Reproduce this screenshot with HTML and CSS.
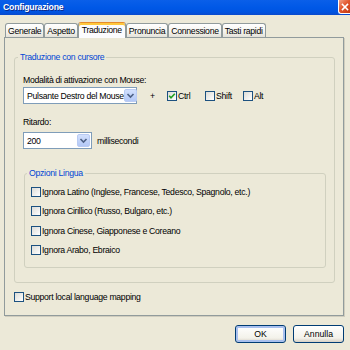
FILE: index.html
```html
<!DOCTYPE html>
<html lang="it">
<head>
  <meta charset="UTF-8">
  <title>Configurazione</title>
  <link rel="stylesheet" href="styles.css">
</head>
<body>
  <div class="window">
    <div class="titlebar">
      <span class="title">Configurazione</span>
      <span class="close">
        <svg width="10" height="10" viewBox="0 0 10 10"><path d="M2.5 2.5 L7.5 7.5 M7.5 2.5 L2.5 7.5" stroke="#fff" stroke-width="1.6" stroke-linecap="square"/></svg>
      </span>
    </div>
    <div class="main">
      <div class="tabs">
        <div class="tab">Generale</div>
        <div class="tab">Aspetto</div>
        <div class="tab active">Traduzione</div>
        <div class="tab">Pronuncia</div>
        <div class="tab">Connessione</div>
        <div class="tab">Tasti rapidi</div>
      </div>
      <div class="panel">
        <fieldset class="group outer">
          <legend>Traduzione con cursore</legend>
          <div class="label">Modalità di attivazione con Mouse:</div>
          <div class="row">
            <div class="combo wide">
              <span>Pulsante Destro del Mouse</span>
              <span class="drop"><svg width="11" height="11" viewBox="0 0 11 11"><path d="M2.5 4 L5.5 7 L8.5 4" fill="none" stroke="#4D6185" stroke-width="1.6"/></svg></span>
            </div>
            <span class="plus">+</span>
            <label class="check opt"><span class="box"><svg width="8" height="8" viewBox="0 0 8 8"><path d="M1.2 3.8 L3 5.8 L6.8 1.8" fill="none" stroke="#21A121" stroke-width="1.6"/></svg></span>Ctrl</label>
            <label class="check opt"><span class="box"></span>Shift</label>
            <label class="check opt"><span class="box"></span>Alt</label>
          </div>
          <div class="label delay">Ritardo:</div>
          <div class="row">
            <div class="combo short">
              <span>200</span>
              <span class="drop"><svg width="11" height="11" viewBox="0 0 11 11"><path d="M2.5 4 L5.5 7 L8.5 4" fill="none" stroke="#4D6185" stroke-width="1.6"/></svg></span>
            </div>
            <span class="unit">millisecondi</span>
          </div>
          <fieldset class="group inner">
            <legend>Opzioni Lingua</legend>
            <label class="check line"><span class="box"></span>Ignora Latino (Inglese, Francese, Tedesco, Spagnolo, etc.)</label>
            <label class="check line"><span class="box"></span>Ignora Cirillico (Russo, Bulgaro, etc.)</label>
            <label class="check line"><span class="box"></span>Ignora Cinese, Giapponese e Coreano</label>
            <label class="check line"><span class="box"></span>Ignora Arabo, Ebraico</label>
          </fieldset>
        </fieldset>
        <label class="check support"><span class="box"></span>Support local language mapping</label>
      </div>
      <div class="buttons">
        <button class="btn default">OK</button>
        <button class="btn">Annulla</button>
      </div>
    </div>
  </div>
</body>
</html>
```

FILE: styles.css
```css
body {
  margin: 0;
  background: #ECE9D8;
  font-family: "Liberation Sans", Arial, sans-serif;
  font-size: 8.7px;
  letter-spacing: -0.3px;
  color: #000;
}
.window {
  width: 350px;
  height: 350px;
  display: flex;
  flex-direction: column;
  overflow: hidden;
}
.titlebar {
  height: 15px;
  display: flex;
  align-items: flex-start;
  justify-content: space-between;
  padding-left: 3px;
  background: linear-gradient(#0A5FE9, #0058E6 50%, #0054E1 80%, #0A4ACC);
}
.title {
  color: #fff;
  font-weight: bold;
  font-size: 8.7px;
  letter-spacing: -0.2px;
  line-height: 14px;
  text-shadow: 1px 1px #0B2A8C;
}
.close {
  width: 12px;
  height: 14px;
  box-sizing: border-box;
  display: flex;
  align-items: center;
  justify-content: center;
  border-left: 1px solid #fff;
  border-bottom: 1px solid #fff;
  border-radius: 0 0 0 3px;
  background: linear-gradient(135deg, #F2A286, #E2582E 45%, #C43A12);
}
.main {
  flex: 1;
  padding: 7px 6px 0 4px;
}
.tabs {
  display: flex;
  align-items: flex-end;
  padding-left: 1px;
  position: relative;
  z-index: 2;
}
.tab {
  height: 13px;
  line-height: 14px;
  padding: 0 2px;
  border: 1px solid #919B9C;
  border-bottom: none;
  border-radius: 3px 3px 0 0;
  background: linear-gradient(#FFFFFF, #F4F3EE 60%, #E4E2D9);
  white-space: nowrap;
}
.tab.active {
  height: 15px;
  line-height: 15px;
  margin-bottom: -1px;
  padding: 0 3px;
  background: #FCFCFE;
  border-top-color: #E68B2C;
  box-shadow: inset 0 2px 0 #FFC83C;
}
.panel {
  border: 1px solid #919B9C;
  box-shadow: 1px 1px 0 #D0CDBE;
  padding-bottom: 11px;
}
.group {
  border: 1px solid #D0D0BF;
  border-radius: 3px;
  min-width: 0;
}
.group legend {
  color: #0046D5;
  line-height: 12px;
  padding: 0 2px;
}
.outer {
  margin: 13px 8px 0 9px;
  padding: 11px 0 14px 8px;
}
.outer > legend {
  margin-left: -5px;
}
.inner {
  margin: 18px 8px 0 1px;
  padding: 3px 0 7px 6px;
}
.inner > legend {
  margin-left: -4px;
}
.label {
  line-height: 12px;
}
.label.delay {
  margin-top: 12px;
}
.row {
  display: flex;
  align-items: center;
  margin-top: 1px;
}
.label.delay + .row {
  margin-top: 4px;
}
.combo {
  height: 17px;
  box-sizing: border-box;
  border: 1px solid #7F9DB9;
  background: #fff;
  display: flex;
  align-items: center;
  padding-left: 3px;
  white-space: nowrap;
}
.combo.wide {
  width: 114px;
}
.combo.short {
  width: 69px;
}
.drop {
  margin-left: auto;
  margin-right: 1px;
  width: 13px;
  height: 13px;
  box-sizing: border-box;
  border: 1px solid #B9CBF3;
  border-radius: 2px;
  background: linear-gradient(#D2E0FD, #B3C8F6);
  display: flex;
  align-items: center;
  justify-content: center;
}
.plus {
  margin-left: 13px;
  width: 17px;
}
.unit {
  margin-left: 5px;
}
.check {
  display: flex;
  align-items: center;
  white-space: nowrap;
}
.box {
  width: 10px;
  height: 10px;
  box-sizing: border-box;
  margin-right: 1px;
  border: 1px solid #1C5180;
  background: linear-gradient(135deg, #DCDCD7, #FFFFFF);
  display: flex;
  align-items: center;
  justify-content: center;
}
.opt {
  width: 38px;
}
.line {
  height: 19.5px;
}
.support {
  height: 14px;
  margin: 7px 0 0 9px;
}
.buttons {
  display: flex;
  justify-content: flex-end;
  gap: 7px;
  margin-top: 9px;
}
.btn {
  width: 51px;
  height: 18px;
  padding: 0;
  font: inherit;
  color: #000;
  border: 1px solid #003C74;
  border-radius: 3px;
  background: linear-gradient(#FFFFFF, #F3F2EA 75%, #D6D0C5);
}
.btn.default {
  box-shadow: inset 0 0 0 2px #A9C0EE;
}
```
